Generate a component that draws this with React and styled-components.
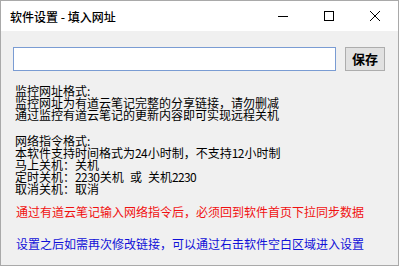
import styled, { createGlobalStyle } from 'styled-components'

const GlobalStyle = createGlobalStyle`
  html, body {
    margin: 0;
    padding: 0;
    background: #ffffff;
  }
  * { box-sizing: border-box; }
`

const cjk = `"Noto Sans CJK SC", "Noto Sans", sans-serif`

export default function App() {
  return (
    <>
      <GlobalStyle />
      <Window>
        <TitleBar>
          <Title>软件设置 - 填入网址</Title>
          <Controls>
            <CtrlButton aria-label="minimize">
              <svg width="10" height="10" viewBox="0 0 10 10">
                <path d="M0 5.5h10" stroke="#000" strokeWidth="1" />
              </svg>
            </CtrlButton>
            <CtrlButton aria-label="maximize">
              <svg width="10" height="10" viewBox="0 0 10 10">
                <rect x="0.5" y="0.5" width="9" height="9" fill="none" stroke="#000" strokeWidth="1" />
              </svg>
            </CtrlButton>
            <CtrlButton aria-label="close">
              <svg width="10" height="10" viewBox="0 0 10 10">
                <path d="M0 0L10 10M10 0L0 10" stroke="#000" strokeWidth="1" />
              </svg>
            </CtrlButton>
          </Controls>
        </TitleBar>
        <Body>
          <InputRow>
            <UrlInput type="text" />
            <SaveButton>保存</SaveButton>
          </InputRow>
          <Info $top={14}>
            <Line>监控网址格式:</Line>
            <Line>监控网址为有道云笔记完整的分享链接，请勿删减</Line>
            <Line>通过监控有道云笔记的更新内容即可实现远程关机</Line>
          </Info>
          <Info $top={14}>
            <Line>网络指令格式:</Line>
            <Line>本软件支持时间格式为<Num>24</Num>小时制，不支持<Num>12</Num>小时制</Line>
            <Line>马上关机：关机</Line>
            <Line>定时关机：<Num>2230</Num>关机<Space />或<Space />关机<Num>2230</Num></Line>
            <Line>取消关机：取消</Line>
          </Info>
          <Notice $color="#f01010" $top={11}>
            通过有道云笔记输入网络指令后，必须回到软件首页下拉同步数据
          </Notice>
          <Notice $color="#1010d8" $top={20}>
            设置之后如需再次修改链接，可以通过右击软件空白区域进入设置
          </Notice>
        </Body>
      </Window>
    </>
  )
}

const Window = styled.div`
  width: 399px;
  height: 266px;
  border: 1px solid #a9a9a9;
  display: flex;
  flex-direction: column;
  background: #f0f0f0;
  overflow: hidden;
`

const TitleBar = styled.div`
  height: 30px;
  background: #ffffff;
  display: flex;
  align-items: center;
  justify-content: space-between;
  flex-shrink: 0;
`

const Title = styled.div`
  padding-left: 9px;
  font-family: ${cjk};
  font-size: 12px;
  color: #000;
  font-weight: 500;
`

const Controls = styled.div`
  display: flex;
  height: 100%;
`

const CtrlButton = styled.div`
  width: 46px;
  height: 30px;
  display: flex;
  align-items: center;
  justify-content: center;
`

const Body = styled.div`
  flex: 1;
  padding: 16px 12px 0 12px;
  display: flex;
  flex-direction: column;
`

const InputRow = styled.div`
  display: flex;
  gap: 9px;
  height: 24px;
`

const UrlInput = styled.input`
  width: 323px;
  height: 24px;
  margin: 0;
  border: 1px solid #7a9cd3;
  background: #fff;
  outline: none;
  padding: 0 3px;
`

const SaveButton = styled.button`
  width: 40px;
  height: 24px;
  margin: 0;
  padding: 0;
  border: 1px solid #adadad;
  background: #e1e1e1;
  font-family: ${cjk};
  font-size: 13px;
  font-weight: 700;
  color: #000;
  line-height: 22px;
`

const Info = styled.div`
  margin-top: ${p => p.$top}px;
  padding-left: 2px;
  font-family: ${cjk};
  font-size: 12px;
  color: #000;
`

const Line = styled.div`
  height: 12px;
  line-height: 12px;
  white-space: nowrap;
`

const Num = styled.span`
  letter-spacing: -0.6px;
  margin-right: 0.6px;
`

const Space = styled.span`
  display: inline-block;
  width: 6px;
`

const Notice = styled.div`
  margin-top: ${p => p.$top}px;
  padding-left: 3px;
  font-family: ${cjk};
  font-size: 12px;
  line-height: 12px;
  height: 12px;
  color: ${p => p.$color};
  white-space: nowrap;
`
